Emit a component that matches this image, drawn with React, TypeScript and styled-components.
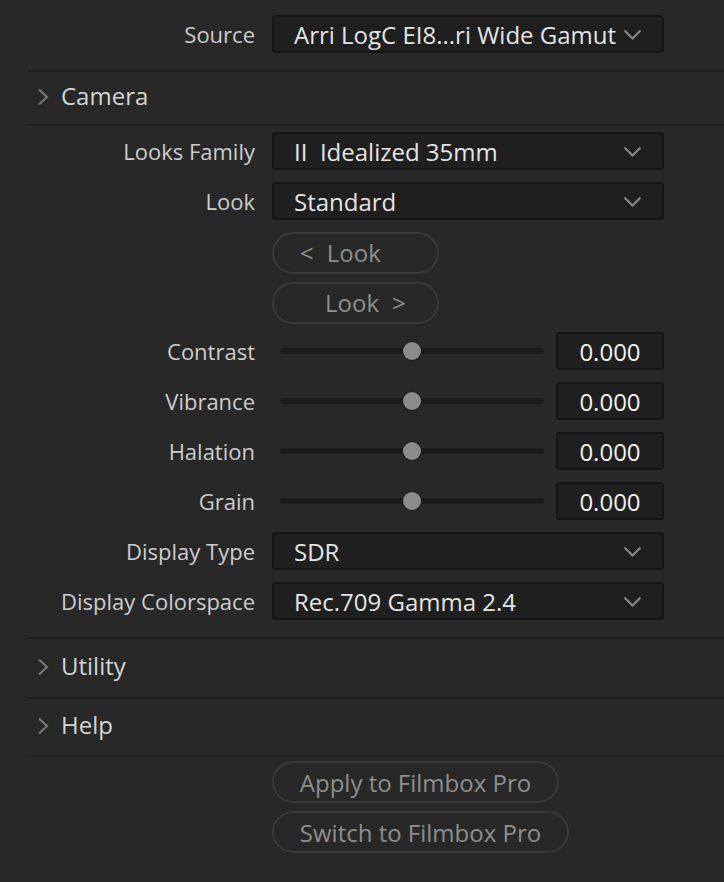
import styled, { createGlobalStyle } from 'styled-components'

const Global = createGlobalStyle`
  body {
    margin: 0;
    background: #282828;
    font-family: 'Open Sans', 'Liberation Sans', sans-serif;
  }
`

const Panel = styled.div`
  width: 724px;
  height: 882px;
  background: #282828;
  color: #cfcfcf;
  font-size: 22px;
  overflow: hidden;
`
const TopSection = styled.div`
  padding: 9px 0 11px;
`
const Body = styled.div`
  padding-bottom: 11px;
`
const Divider = styled.div`
  height: 2px;
  margin-left: 28px;
  background: #1e1e1e;
`
const SectionHeader = styled.div<{ $h: number }>`
  height: ${(p) => p.$h}px;
  box-sizing: border-box;
  display: flex;
  align-items: center;
  gap: 12px;
  padding: 0 0 5px 37px;
  color: #d4d4d4;
  font-size: 24px;
  svg {
    margin-top: 2px;
  }
`
const Row = styled.div`
  height: 50px;
  display: grid;
  grid-template-columns: 255px 392px;
  column-gap: 17px;
  align-items: center;
`
const Label = styled.div`
  text-align: right;
  color: #cdcdcd;
  white-space: nowrap;
`
const Select = styled.div`
  height: 38px;
  box-sizing: border-box;
  display: flex;
  align-items: center;
  justify-content: space-between;
  padding: 0 20px 0 20px;
  background: #1f1f1f;
  border: 2px solid #151515;
  border-radius: 4px;
  color: #e4e4e4;
  font-size: 24px;
  white-space: pre;
`
const SliderBox = styled.div`
  display: flex;
  align-items: center;
`
const Track = styled.div`
  position: relative;
  flex: 1;
  height: 6px;
  margin: 0 12px 0 8px;
  border-radius: 3px;
  background: #1b1b1b;
`
const Thumb = styled.div`
  position: absolute;
  top: 50%;
  width: 18px;
  height: 18px;
  margin: -9px 0 0 -9px;
  border-radius: 50%;
  background: #8b8b8b;
  box-shadow: 0 0 0 1px #1f1f1f;
`
const NumberField = styled.div`
  width: 108px;
  height: 38px;
  box-sizing: border-box;
  display: flex;
  align-items: center;
  justify-content: center;
  background: #1f1f1f;
  border: 2px solid #151515;
  border-radius: 3px;
  color: #f0f0f0;
  font-size: 24px;
`
const Pill = styled.button<{ $w: number; $pad?: number }>`
  width: ${(p) => p.$w}px;
  height: 42px;
  box-sizing: border-box;
  display: flex;
  align-items: center;
  justify-content: ${(p) => (p.$pad === undefined ? 'center' : 'flex-start')};
  gap: 13px;
  background: transparent;
  border: 2px solid #3a3a3a;
  border-radius: 21px;
  color: #8e8e8e;
  font-family: inherit;
  font-size: 24px;
  padding: 0 0 0 ${(p) => p.$pad ?? 0}px;
`
const ButtonRow = styled(Row)<{ $shift?: number }>`
  padding-top: ${(p) => p.$shift ?? 0}px;
  box-sizing: border-box;
`
const Empty = styled.div``

const Chevron = () => (
  <svg width="19" height="11" viewBox="0 0 19 11">
    <path d="M1.5 1.5 L9.5 9.5 L17.5 1.5" fill="none" stroke="#8a8a8a" strokeWidth="2" />
  </svg>
)

const Caret = () => (
  <svg width="12" height="18" viewBox="0 0 12 18">
    <path d="M2 1.5 L10 9 L2 16.5" fill="none" stroke="#7a7a7a" strokeWidth="2" />
  </svg>
)

const SelectRow = ({ label, value }: { label: string; value: string }) => (
  <Row>
    <Label>{label}</Label>
    <Select>
      <span>{value}</span>
      <Chevron />
    </Select>
  </Row>
)

const SliderRow = ({ label, value, pos }: { label: string; value: number; pos: number }) => (
  <Row>
    <Label>{label}</Label>
    <SliderBox>
      <Track>
        <Thumb style={{ left: `${pos * 100}%` }} />
      </Track>
      <NumberField>{value.toFixed(3)}</NumberField>
    </SliderBox>
  </Row>
)

const Header = ({ title, h }: { title: string; h: number }) => (
  <SectionHeader $h={h}>
    <Caret />
    <span>{title}</span>
  </SectionHeader>
)

const sliders = ['Contrast', 'Vibrance', 'Halation', 'Grain']

export default function App() {
  return (
    <Panel>
      <Global />
      <TopSection>
        <SelectRow label="Source" value="Arri LogC EI8...ri Wide Gamut" />
      </TopSection>
      <Divider />
      <Header title="Camera" h={52} />
      <Divider />
      <Body>
        <SelectRow label="Looks Family" value="II  Idealized 35mm" />
        <SelectRow label="Look" value="Standard" />
        <ButtonRow $shift={3}>
          <Empty />
          <Pill $w={167} $pad={26}>
            <span>&lt;</span>
            <span>Look</span>
          </Pill>
        </ButtonRow>
        <ButtonRow $shift={3}>
          <Empty />
          <Pill $w={167} $pad={51}>
            <span>Look</span>
            <span>&gt;</span>
          </Pill>
        </ButtonRow>
        {sliders.map((s) => (
          <SliderRow key={s} label={s} value={0} pos={0.5} />
        ))}
        <SelectRow label="Display Type" value="SDR" />
        <SelectRow label="Display Colorspace" value="Rec.709 Gamma 2.4" />
      </Body>
      <Divider />
      <Header title="Utility" h={58} />
      <Divider />
      <Header title="Help" h={56} />
      <Divider />
      <Row>
        <Empty />
        <Pill $w={287}>Apply to Filmbox Pro</Pill>
      </Row>
      <Row>
        <Empty />
        <Pill $w={297}>Switch to Filmbox Pro</Pill>
      </Row>
    </Panel>
  )
}
